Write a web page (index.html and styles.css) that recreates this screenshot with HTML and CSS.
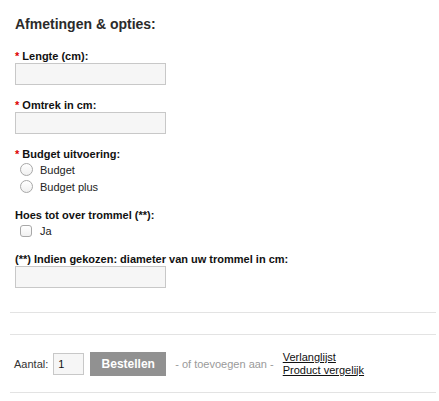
FILE: index.html
```html
<!DOCTYPE html>
<html lang="nl">
<head>
<meta charset="utf-8">
<title>Afmetingen &amp; opties</title>
<link rel="stylesheet" href="styles.css">
</head>
<body>
<div class="page">
  <div class="options">
    <h2 class="title">Afmetingen &amp; opties:</h2>
    <div class="field">
      <label class="label"><span class="req">*</span> Lengte (cm):</label>
      <input class="text" type="text">
    </div>
    <div class="field">
      <label class="label"><span class="req">*</span> Omtrek in cm:</label>
      <input class="text" type="text">
    </div>
    <div class="field">
      <div class="label"><span class="req">*</span> Budget uitvoering:</div>
      <label class="choice"><span class="radio"></span>Budget</label>
      <label class="choice"><span class="radio"></span>Budget plus</label>
    </div>
    <div class="field">
      <div class="label">Hoes tot over trommel (**):</div>
      <label class="choice"><span class="check"></span>Ja</label>
    </div>
    <div class="field">
      <label class="label">(**) Indien gekozen: diameter van uw trommel in cm:</label>
      <input class="text" type="text">
    </div>
  </div>
  <div class="sep"></div>
  <div class="actions">
    <span class="qty-label">Aantal:</span>
    <input class="qty" type="text" value="1">
    <button class="order">Bestellen</button>
    <span class="or">- of toevoegen aan -</span>
    <div class="links">
      <a href="#">Verlanglijst</a>
      <a href="#">Product vergelijk</a>
    </div>
  </div>
</div>
</body>
</html>
```
FILE: styles.css
```css
* { box-sizing: border-box; }
body {
  margin: 0;
  background: #fff;
  font-family: "Liberation Sans", Arial, sans-serif;
  color: #1a1a1a;
}
.page {
  padding: 0 3px 0 10px;
}
.options {
  padding: 15px 5px 24px;
  border-bottom: 1px solid #e3e3e3;
}
.title {
  margin: 0 0 16px;
  font-size: 14px;
  line-height: 18px;
  font-weight: bold;
  color: #2b2b2b;
}
.field {
  margin-bottom: 13px;
}
.field:last-child { margin-bottom: 0; }
.label {
  display: block;
  font-size: 11px;
  line-height: 14px;
  font-weight: bold;
  color: #111;
}
.req { color: #d00; }
.text {
  display: block;
  width: 151px;
  height: 22px;
  margin: 0;
  border: 1px solid #c8c8c8;
  background: #f6f6f6;
  font: 11px "Liberation Sans", Arial, sans-serif;
  padding: 2px 4px;
}
.choice {
  display: flex;
  align-items: center;
  height: 17px;
  font-size: 11px;
  color: #222;
  padding-left: 5px;
}
.radio {
  width: 13px;
  height: 13px;
  border: 1px solid #a8a8a8;
  border-radius: 50%;
  background: linear-gradient(#fff, #f0f0f0);
  margin-right: 7px;
  flex: none;
}
.check {
  width: 12px;
  height: 12px;
  border: 1px solid #a8a8a8;
  border-radius: 3px;
  background: linear-gradient(#fff, #f0f0f0);
  margin-right: 8px;
  flex: none;
}
.sep {
  height: 22px;
  border-bottom: 1px solid #e3e3e3;
}
.actions {
  display: flex;
  align-items: center;
  height: 58px;
  padding-left: 4px;
  border-bottom: 1px solid #e3e3e3;
  font-size: 11px;
}
.qty-label { color: #333; margin-right: 5px; }
.qty {
  width: 31px;
  height: 22px;
  margin: 0 6px 0 0;
  border: 1px solid #c8c8c8;
  background: #f6f6f6;
  font: 11px "Liberation Sans", Arial, sans-serif;
  color: #111;
  padding: 0 4px;
}
.order {
  width: 76px;
  height: 24px;
  border: 0;
  margin: 0 9px 0 0;
  background: #919191;
  color: #fff;
  font: bold 12px "Liberation Sans", Arial, sans-serif;
  padding: 0;
}
.or { color: #9a9a9a; margin-right: 9px; }
.links {
  display: flex;
  flex-direction: column;
  line-height: 13px;
}
.links a { color: #111; text-decoration: underline; }
```
